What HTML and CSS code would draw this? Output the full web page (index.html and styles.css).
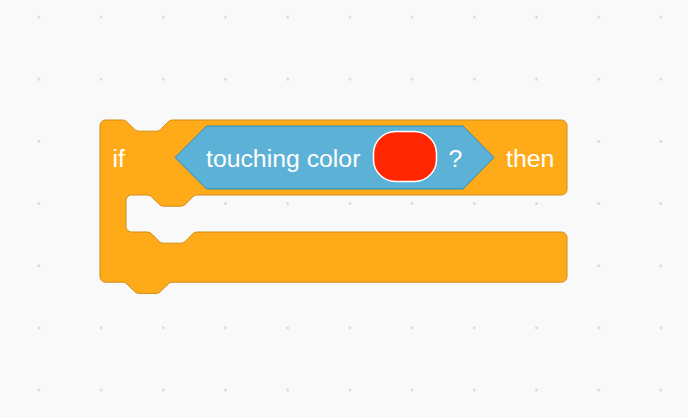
FILE: index.html
```html
<!DOCTYPE html>
<html lang="en">
<head>
    <meta charset="UTF-8">
    <title>Scratch - if touching color</title>
    <link rel="stylesheet" href="styles.css">
</head>
<body>

    <div class="workspace">
        <svg class="block-if" width="472" height="180" viewBox="-1 -1 472 180">
            <!-- C-shaped control block -->
            <path class="control-shape" d="M 0,5.6 A 5.6,5.6 0 0 1 5.6,0 H 22.4
                c 2.8,0 4.2,1.4 5.6,2.8 l 5.6,5.6 c 1.4,1.4 2.8,2.8 5.6,2.8 h 16.8 c 2.8,0 4.2,-1.4 5.6,-2.8 l 5.6,-5.6 c 1.4,-1.4 2.8,-2.8 5.6,-2.8
                H 461.4 A 5.6,5.6 0 0 1 467,5.6 V 69.4 A 5.6,5.6 0 0 1 461.4,75
                H 97.4
                c -2.8,0 -4.2,1.4 -5.6,2.8 l -5.6,5.6 c -1.4,1.4 -2.8,2.8 -5.6,2.8 h -16.8 c -2.8,0 -4.2,-1.4 -5.6,-2.8 l -5.6,-5.6 c -1.4,-1.4 -2.8,-2.8 -5.6,-2.8
                H 31.6 A 5.6,5.6 0 0 0 26,80.6 V 106.4 A 5.6,5.6 0 0 0 31.6,112 H 47
                c 2.8,0 4.2,1.4 5.6,2.8 l 5.6,5.6 c 1.4,1.4 2.8,2.8 5.6,2.8 h 16.8 c 2.8,0 4.2,-1.4 5.6,-2.8 l 5.6,-5.6 c 1.4,-1.4 2.8,-2.8 5.6,-2.8
                H 461.4 A 5.6,5.6 0 0 1 467,117.6 V 156.6 A 5.6,5.6 0 0 1 461.4,162.2
                H 72.8
                c -2.8,0 -4.2,1.4 -5.6,2.8 l -5.6,5.6 c -1.4,1.4 -2.8,2.8 -5.6,2.8 h -16.8 c -2.8,0 -4.2,-1.4 -5.6,-2.8 l -5.6,-5.6 c -1.4,-1.4 -2.8,-2.8 -5.6,-2.8
                H 5.6 A 5.6,5.6 0 0 1 0,156.6 Z"/>

            <text class="block-label" x="12.5" y="46.5">if</text>

            <!-- boolean reporter -->
            <path class="sensing-shape" d="M 75,37.5 L 106.5,6 H 363 L 394,37.5 L 363,69 H 106.5 Z"/>
            <text class="block-label" x="106" y="46.5">touching color</text>
            <rect class="color-field" x="273.5" y="11.5" width="63" height="50" rx="22" ry="22"/>
            <text class="block-label" x="348.5" y="46.5">?</text>

            <text class="block-label" x="406" y="46.5">then</text>
        </svg>
    </div>

</body>
</html>
```

FILE: styles.css
```css
body {
    margin: 0;
    padding: 0;
    background-color: #f9f9f9;
    font-family: 'Liberation Sans', Arial, sans-serif;
}

.workspace {
    position: relative;
    width: 688px;
    height: 417px;
    overflow: hidden;
    background-image: radial-gradient(circle, #d8d8d8 1px, rgba(216, 216, 216, 0) 1.6px);
    background-size: 62.2px 62.2px;
    background-position: 7.9px -14.1px;
}

.block-if {
    position: absolute;
    left: 98.5px;
    top: 119px;
    overflow: visible;
}

.control-shape {
    fill: #ffab19;
    stroke: #cf8b17;
    stroke-width: 1;
}

.sensing-shape {
    fill: #5cb1d6;
    stroke: #2e8eb8;
    stroke-width: 1;
}

.color-field {
    fill: #ff2600;
    stroke: #ffffff;
    stroke-width: 1.5;
}

.block-label {
    fill: #ffffff;
    font-family: 'Liberation Sans', Arial, sans-serif;
    font-size: 24.8px;
}
```
